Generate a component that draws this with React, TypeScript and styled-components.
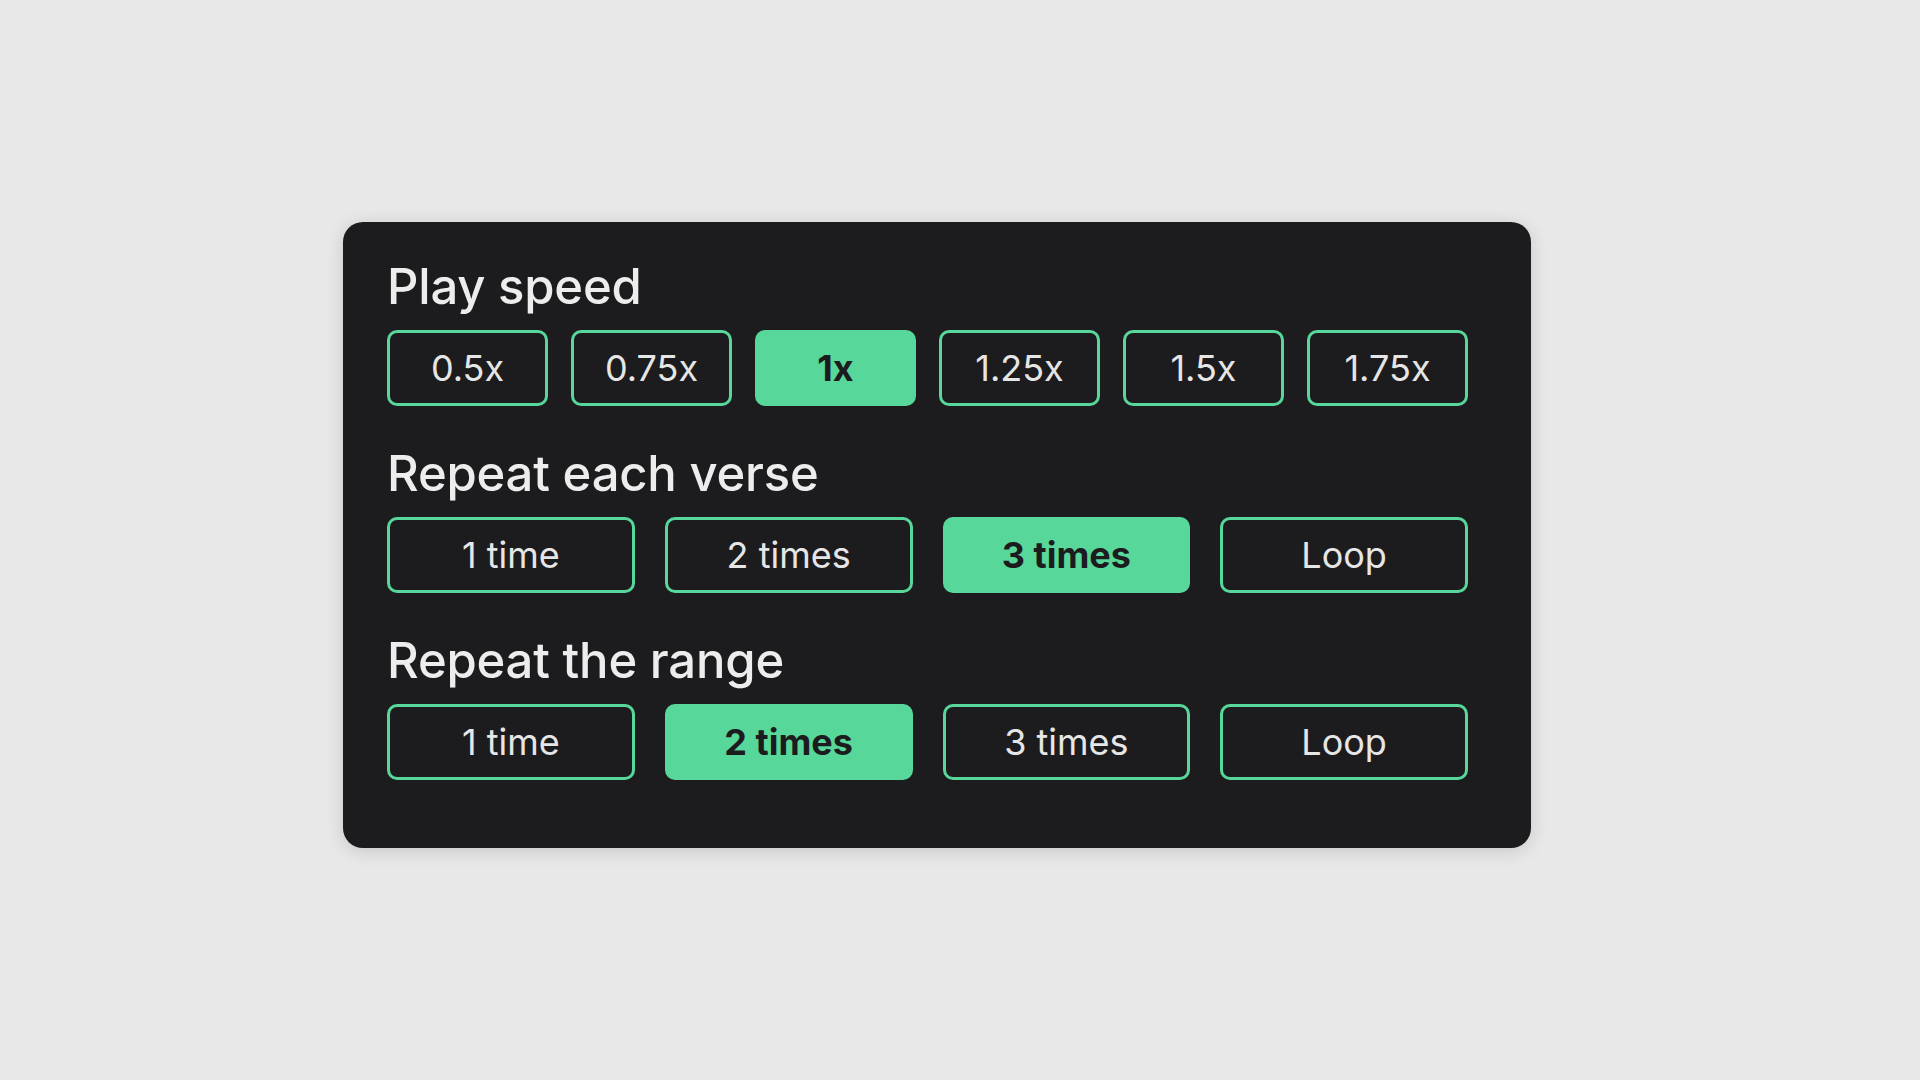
import React from 'react'
import styled, { createGlobalStyle } from 'styled-components'

const GlobalStyle = createGlobalStyle`
  html, body {
    margin: 0;
    padding: 0;
    background: #e8e8e8;
  }
  body {
    font-family: Inter, "Noto Sans", "Liberation Sans", sans-serif;
  }
`

const Page = styled.div`
  width: 1920px;
  height: 1080px;
  box-sizing: border-box;
  padding: 222px 0 0 343px;
  background: #e8e8e8;
`

const Card = styled.div`
  width: 1081px;
  padding: 35px 63px 68px 44px;
  background: #1c1c1e;
  border-radius: 20px;
  box-shadow: 0 3px 18px rgba(0, 0, 0, 0.14);
  display: flex;
  flex-direction: column;
  gap: 38px;
`

const Section = styled.section`
  display: flex;
  flex-direction: column;
  gap: 13px;
`

const Title = styled.h2`
  margin: 0;
  font-size: 49px;
  line-height: 60px;
  font-weight: 500;
  color: #ededed;
  letter-spacing: -0.2px;
`

const Row = styled.div<{ $cols: number; $gap: number }>`
  display: grid;
  grid-template-columns: repeat(${p => p.$cols}, 1fr);
  gap: ${p => p.$gap}px;
`

const Option = styled.button<{ $active?: boolean }>`
  height: 76px;
  box-sizing: border-box;
  border-radius: 10px;
  border: 3px solid #58d79a;
  background: ${p => (p.$active ? '#58d79a' : 'transparent')};
  color: ${p => (p.$active ? '#1c1c1e' : '#e6e6e6')};
  font-family: Inter, "Noto Sans", "Liberation Sans", sans-serif;
  font-size: 36px;
  font-weight: ${p => (p.$active ? 700 : 400)};
  display: flex;
  align-items: center;
  justify-content: center;
  padding: 0;
  cursor: pointer;
`

type Group = { title: string; options: string[]; active: number; gap: number }

const groups: Group[] = [
  { title: 'Play speed', options: ['0.5x', '0.75x', '1x', '1.25x', '1.5x', '1.75x'], active: 2, gap: 23 },
  { title: 'Repeat each verse', options: ['1 time', '2 times', '3 times', 'Loop'], active: 2, gap: 30 },
  { title: 'Repeat the range', options: ['1 time', '2 times', '3 times', 'Loop'], active: 1, gap: 30 },
]

export default function App() {
  return (
    <Page>
      <GlobalStyle />
      <Card>
        {groups.map(g => (
          <Section key={g.title}>
            <Title>{g.title}</Title>
            <Row $cols={g.options.length} $gap={g.gap}>
              {g.options.map((o, i) => (
                <Option key={o} $active={i === g.active}>
                  {o}
                </Option>
              ))}
            </Row>
          </Section>
        ))}
      </Card>
    </Page>
  )
}
